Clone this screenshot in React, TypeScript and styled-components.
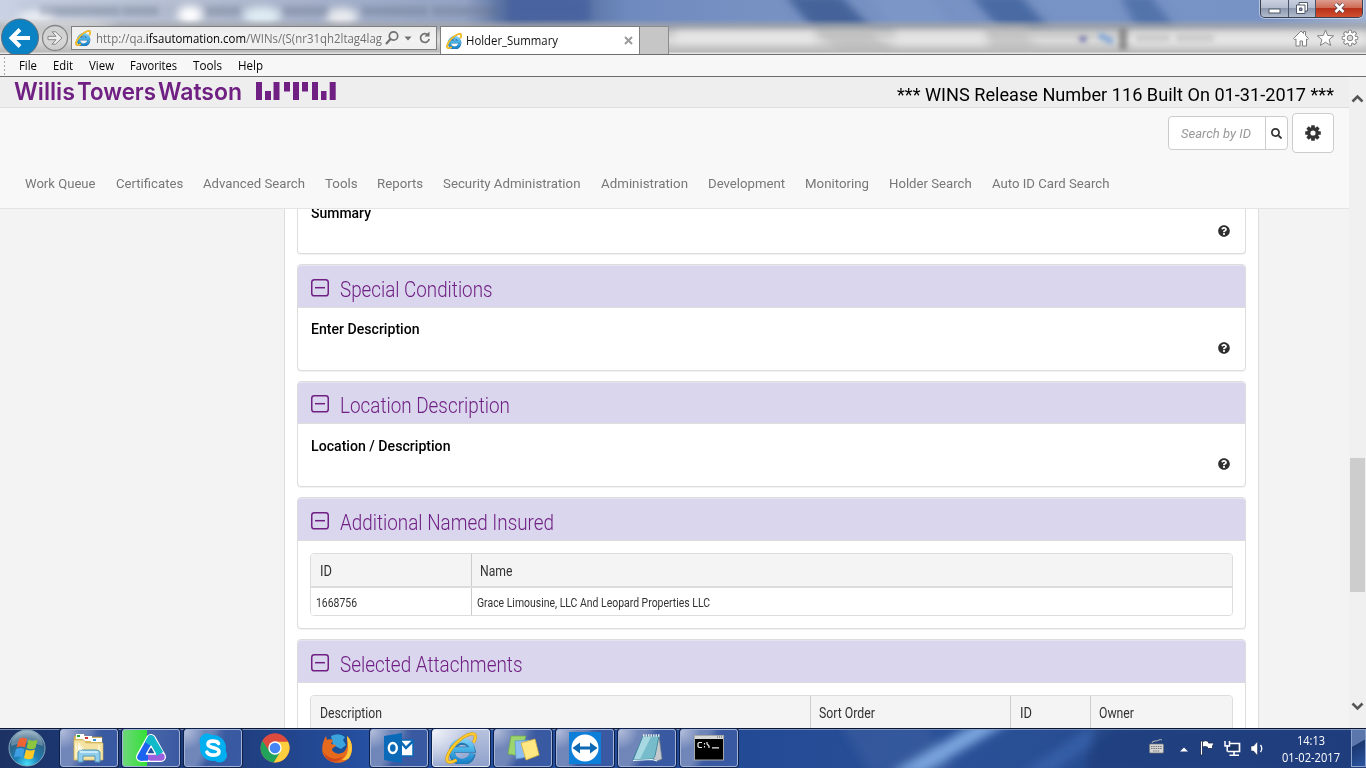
import React, { useLayoutEffect, useRef } from 'react';
import styled, { createGlobalStyle, css } from 'styled-components';
import { FaQuestionCircle, FaSearch } from 'react-icons/fa';

const GlobalStyle = createGlobalStyle`
  *, *::before, *::after { box-sizing: border-box; }
  body { margin: 0; overflow: hidden; background: #fff; font-family: Roboto, "Liberation Sans", sans-serif; }
  svg { display: block; }
`;

const ui = css`font-family: "Open Sans", "Noto Sans", sans-serif;`;

/* Text set to a fixed measure: the glyphs are condensed or widened to fill it. */
const FitBox = styled.span<{ $w: number }>`
  display: block;
  flex: none;
  width: ${(p) => p.$w}px;
  white-space: nowrap;
`;
const FitInner = styled.span`
  display: inline-block;
  vertical-align: top;
  transform-origin: 0 50%;
`;
function Fit({ w, children }: { w: number; children: React.ReactNode }) {
  const ref = useRef<HTMLSpanElement>(null);
  useLayoutEffect(() => {
    const el = ref.current;
    if (!el) return;
    el.style.transform = 'none';
    const natural = el.getBoundingClientRect().width;
    if (natural > 0) el.style.transform = `scaleX(${w / natural})`;
  }, [w, children]);
  return <FitBox $w={w}><FitInner ref={ref}>{children}</FitInner></FitBox>;
}

const Screen = styled.div`
  width: 1366px; height: 768px; overflow: hidden;
  display: flex; flex-direction: column;
`;

/* ---------- browser chrome ---------- */
const Chrome = styled.header`
  position: relative; height: 55px; flex: none; overflow: hidden;
  border-bottom: 1px solid #6d6d6d; background: #cfcfcf;
`;
const Glass = styled.svg`position: absolute; left: 0; top: 0;`;
const ChromeBar = styled.div`
  position: relative; height: 54px; display: flex; align-items: flex-end;
`;
const BackForward = styled.svg`flex: none;`;
const Address = styled.div`
  ${ui}
  flex: none; margin: 0 0 4px 1px; width: 366px; height: 24px;
  border: 1px solid #7f7f7f; background: rgba(246, 246, 246, 0.86);
  display: flex; align-items: center; padding-left: 3px;
  font-size: 12px; line-height: 16px; color: #707070;
  b { font-weight: 400; color: #000; }
`;
const Url = styled.div`margin: 2px 0 0 5px; width: 286px; overflow: hidden;`;
const AddressIcons = styled.svg`margin-left: 3px; flex: none;`;
const Tab = styled.div`
  ${ui}
  flex: none; margin-left: 3px; width: 200px; height: 28px; background: #fff;
  border: 1px solid #7f7f7f; border-bottom: 0;
  display: flex; align-items: center; padding-left: 5px;
  font-size: 12px; line-height: 16px; color: #111;
`;
const TabTitle = styled.div`margin-left: 4px; width: 158px;`;
const NewTab = styled.div`
  flex: none; width: 29px; height: 28px; border: 1px solid #8c8c8c; border-left: 0; border-bottom: 0;
  background: #c6c6c6;
`;
const ChromeTools = styled.svg`margin: 0 6px 6px auto; flex: none;`;
const WindowButtons = styled.div`
  position: absolute; right: 3px; top: 0; display: flex;
  height: 18px; width: 103px; border: 1px solid #39404f; border-top: 0; border-radius: 0 0 5px 5px;
  overflow: hidden; box-shadow: 0 0 0 1px rgba(255,255,255,.45);
`;
const WinButton = styled.div<{ $w: number; $close?: boolean }>`
  width: ${(p) => p.$w}px; height: 17px; flex: none; padding-bottom: 2px;
  display: flex; align-items: center; justify-content: center;
  border-right: ${(p) => (p.$close ? '0' : '1px solid #4a5468')};
  background: ${(p) => p.$close
    ? 'linear-gradient(#dd9c8e 0, #cf6b55 45%, #b8301a 50%, #d0502f 100%)'
    : 'linear-gradient(#c9d0df 0, #b3bdd0 45%, #8d98ae 50%, #b2bccd 100%)'};
`;

const MenuBar = styled.nav`
  ${ui}
  height: 22px; flex: none; background: #f7f7f7; border-bottom: 1px solid #6d6d6d;
  display: flex; align-items: center; font-size: 12px; line-height: 16px; color: #000;
`;
const Grip = styled.div`
  width: 1px; height: 18px; margin: 0 14px 0 4px;
  background: repeating-linear-gradient(#a8a8a8 0 2px, transparent 2px 4px);
`;
const MenuItem = styled.div<{ $gap: number }>`margin-right: ${(p) => p.$gap}px;`;

/* ---------- page ---------- */
const Page = styled.div`height: 651px; flex: none; display: flex;`;
const PageView = styled.div`width: 1349px; flex: none; overflow: hidden; display: flex; flex-direction: column;`;
const Scroll = styled.div`
  width: 17px; flex: none; background: #f0f0f0; padding: 0 1px;
  display: flex; flex-direction: column;
`;
const ScrollArrow = styled.svg`flex: none;`;
const Thumb = styled.div`height: 134px; margin-top: 347px; width: 15px; background: #cdcdcd;`;
const ScrollRest = styled.div`flex: 1;`;

const Banner = styled.div`
  height: 31px; flex: none; background: #eee; border-bottom: 1px solid #dedede;
  display: flex; align-items: flex-start; padding: 0 15px 0 14px;
`;
const Wordmark = styled.div`
  display: flex; font: 600 24px/30px Inter, sans-serif; color: #702082; gap: 2px; margin-right: 14px;
`;
const Release = styled.div`margin: 6px 0 0 auto; font-size: 18px; line-height: 24px; color: #000;`;

const Header = styled.div`
  height: 101px; flex: none; background: #f8f8f8; border-bottom: 1px solid #e4e4e4;
  display: flex; flex-direction: column;
`;
const Actions = styled.div`display: flex; justify-content: flex-end; align-items: center; gap: 4px; padding: 5px 15px 0 0;`;
const SearchGroup = styled.div`
  display: flex; width: 120px; height: 34px; border: 1px solid #ccc; border-radius: 4px; background: #fff; color: #333;
`;
const SearchInput = styled.div`
  width: 97px; border-right: 1px solid #ccc; padding-left: 12px;
  display: flex; align-items: center; font-style: italic; font-size: 13.5px; color: #999;
`;
const SearchButton = styled.div`flex: 1; display: flex; align-items: center; justify-content: center;`;
const GearButton = styled.div`
  width: 42px; height: 40px; border: 1px solid #ccc; border-radius: 4px; background: #fff; color: #333;
  display: flex; align-items: center; justify-content: center;
`;
const Nav = styled.nav`
  display: flex; gap: 20px; margin-top: 22px; padding-left: 25px;
  font-size: 13px; line-height: 18px; color: #777;
`;

const Content = styled.main`
  height: 519px; flex: none; overflow: hidden; background: #f3f3f3; padding: 0 90px 0 284px; display: flex;
`;
const Well = styled.div`
  width: 975px; height: 540px; background: #fff; border: 1px solid #ddd; border-width: 0 1px; padding: 0 12px;
`;
const Panel = styled.section<{ $h: number; $open?: boolean }>`
  height: ${(p) => p.$h}px; width: 949px; margin-bottom: 10px;
  border: 1px solid #ddd; border-radius: 4px; background: #fff; box-shadow: 0 1px 1px rgba(0,0,0,.06);
  ${(p) => p.$open && css`border-top: 0; border-radius: 0 0 4px 4px;`}
`;
const PanelHead = styled.h3<{ $h: number }>`
  margin: 0; height: ${(p) => p.$h}px; display: flex; align-items: flex-start; gap: 11px; padding: 0 0 0 13px;
  background: #d9d6ee; border: 1px solid #ddd; border-width: 0 0 1px; box-shadow: inset 0 1px #e6e4f3;
  color: #702082; font-size: 22px; line-height: 28px; font-weight: 300;
  border-radius: 3px 3px 0 0;
`;
const HeadText = styled.div<{ $top: number }>`padding-top: ${(p) => p.$top}px;`;
const PanelBody = styled.div<{ $top: number }>`
  padding: ${(p) => p.$top}px 16px 0 13px; display: flex; flex-direction: column;
  color: #000; font-size: 14px; line-height: 20px; font-weight: 500;
`;
const SummaryLine = styled.div`margin-top: -6px; height: 22px;`;
const Label = styled.div<{ $h?: number }>`height: ${(p) => p.$h ?? 23}px;`;
const Help = styled.div`align-self: flex-end; height: 12px; color: #2f2f2f; margin-right: -.5px;`;

const Table = styled.div`
  margin: 12px 0 0 12px; width: 923px; border: 1px solid #ddd; border-radius: 4px; overflow: hidden; color: #333;
`;
const Row = styled.div<{ $head?: boolean }>`
  display: flex;
  height: ${(p) => (p.$head ? 34 : 27)}px;
  background: ${(p) => (p.$head ? '#f4f4f4' : '#fff')};
  border-bottom: ${(p) => (p.$head ? '2px solid #ddd' : '0')};
  font-size: ${(p) => (p.$head ? 14 : 12)}px;
`;
const Cell = styled.div<{ $w?: number; $pad: number }>`
  ${(p) => (p.$w ? `width: ${p.$w}px; flex: none; border-right: 1px solid #ccc;` : 'flex: 1;')}
  padding: 2px 0 0 ${(p) => p.$pad}px; display: flex; align-items: center;
`;

/* ---------- taskbar ---------- */
const Taskbar = styled.footer`
  position: relative; height: 40px; flex: none; overflow: hidden; background: #21458c;
`;
const TaskRow = styled.div`
  ${ui}
  position: relative; height: 40px; padding-top: 1px; display: flex; color: #fff; font-size: 12px; line-height: 17px;
`;
const StartSlot = styled.div`width: 60px; height: 39px; padding-left: 8px; flex: none;`;
const TaskButton = styled.div<{ $look: 'framed' | 'plain' | 'active' | 'progress' }>`
  width: 58px; height: 38px; margin-right: 4px; flex: none;
  display: flex; align-items: center; justify-content: center; border-radius: 3px;
  ${(p) => p.$look !== 'plain' && css`
    border: 1px solid #a3b3d6; box-shadow: 0 0 0 1px #0d1f4b;
    background: radial-gradient(circle at 0 0, #b6c0dc 0, #7086b9 30%, transparent 62%), linear-gradient(115deg, #7287b9 0 35%, #3a59a0 50%, #385aa4);
  `}
  ${(p) => p.$look === 'active' && css`
    border-color: #e3e8f3;
    background: radial-gradient(circle at 0 0, #f2f4fa 0, transparent 60%), linear-gradient(#b7c2de, #8fa1cc);
  `}
  ${(p) => p.$look === 'progress' && css`
    background: linear-gradient(90deg, #6ed77b 0, #34e036 42%, #4866a8 43%, #3b5aa2);
  `}
`;
const Tray = styled.div`margin-left: auto; display: flex; flex: none;`;
const Clock = styled.div`
  width: 76px; padding-top: 3px; margin-left: 5px; display: flex; flex-direction: column; align-items: center;
`;
const ShowDesktop = styled.div`
  width: 15px; height: 38px; border: 1px solid #8ba3cd; margin-left: 2px;
  background: linear-gradient(150deg, #5a76ab 0 38%, #1b3871 40%, #2b55a0);
`;

function IeLogo({ size }: { size: number }) {
  return (
    <svg width={size} height={size} viewBox="0 0 32 32" style={{ flex: 'none' }}>
      <defs>
        <linearGradient id="ieBlue" gradientUnits="userSpaceOnUse" x1="0" y1="4" x2="0" y2="30">
          <stop offset="0" stopColor="#8fdcfa" /><stop offset=".5" stopColor="#4bb3e6" /><stop offset="1" stopColor="#1b83cb" />
        </linearGradient>
      </defs>
      <g fill="none">
        <path d="M27.500 21.500A10.300 10.300 0 1 1 27.300 17.700H9" stroke="#2478b2" strokeWidth="6.200" />
        <path d="M27 21.500A10.300 10.300 0 1 1 27.300 17.700H9" stroke="url(#ieBlue)" strokeWidth="4.800" />
        <path d="M28.500 10.500C32 4 30.500.9 25.500 2 16 4.500 4.500 16.500 2.200 25c-1.300 6 2.800 6.500 9.300 3" stroke="#cf9412" strokeWidth="3.200" />
        <path d="M28.500 10.500C32 4 30.500.9 25.500 2 16 4.500 4.500 16.500 2.200 25c-1.300 6 2.800 6.500 9.300 3" stroke="#fccb2e" strokeWidth="2.300" />
      </g>
    </svg>
  );
}

function GlassBackdrop() {
  return (
    <Glass width="1366" height="54" viewBox="0 0 1366 54">
      <defs>
        <linearGradient id="sky" x1="0" x2="1" y1="0" y2="0">
          <stop offset="0" stopColor="#c9d2e4" /><stop offset=".15" stopColor="#b4bdd1" /><stop offset=".34" stopColor="#93a3c5" />
          <stop offset=".375" stopColor="#4a659b" /><stop offset=".42" stopColor="#56709f" /><stop offset=".46" stopColor="#6f8abf" />
          <stop offset=".55" stopColor="#7891c3" /><stop offset=".93" stopColor="#7793c6" /><stop offset="1" stopColor="#9fb2d4" />
        </linearGradient>
        <linearGradient id="frost" x1="0" x2="0" y1="0" y2="1">
          <stop offset="0" stopColor="#aaa" stopOpacity="0" /><stop offset=".2" stopColor="#a2a4a8" stopOpacity=".8" />
          <stop offset=".4" stopColor="#c8c8c8" /><stop offset=".62" stopColor="#dadada" /><stop offset="1" stopColor="#b4b4b4" />
        </linearGradient>
        <filter id="b3" x="-20%" y="-60%" width="140%" height="220%"><feGaussianBlur stdDeviation="4" /></filter>
        <filter id="b2" x="-20%" y="-60%" width="140%" height="220%"><feGaussianBlur stdDeviation="2.600" /></filter>
      </defs>
      <rect width="1366" height="54" fill="url(#sky)" />
      <g filter="url(#b3)">
        <path d="M785-5h55l38 40h-60z" fill="#45649a" /><path d="M870-5h60l20 32h-58z" fill="#7c96c8" />
        <path d="M970-5h50l35 40h-50z" fill="#4a6aa3" /><path d="M1120-5h30l30 40h-40z" fill="#5373ab" />
        <rect x="510" y="-5" width="80" height="28" fill="#4864a0" />
        <path d="M20 4h470v14H20z" fill="#9aa4b9" opacity=".3" />
        <ellipse cx="36" cy="17" rx="18" ry="6" fill="#eff3f8" /><ellipse cx="190" cy="15" rx="12" ry="9" fill="#fff" />
        <ellipse cx="262" cy="16" rx="19" ry="9" fill="#dfecf3" /><ellipse cx="342" cy="17" rx="16" ry="9" fill="#e8eaee" />
      </g>
      <g filter="url(#b2)" fill="#4f5b71" opacity=".22">
        <rect x="40" y="6" width="80" height="10" /><rect x="122" y="6" width="36" height="10" /><rect x="206" y="6" width="34" height="10" />
        <rect x="283" y="6" width="45" height="10" /><rect x="362" y="6" width="66" height="10" /><rect x="432" y="6" width="66" height="10" />
      </g>
      <rect y="19" width="1366" height="35" fill="url(#frost)" />
      <g filter="url(#b3)">
        <path d="M815 30h55l28 28h-55z" fill="#b9b9b9" opacity=".65" /><path d="M985 28h40l15 30h-45z" fill="#bdbdbd" opacity=".6" />
        <rect x="675" y="32" width="140" height="10" fill="#eaeaea" /><rect x="895" y="32" width="90" height="12" fill="#e5e5e5" />
        <rect x="1130" y="33" width="236" height="12" fill="#e6e6e6" /><ellipse cx="55" cy="25" rx="60" ry="4" fill="#ddd" />
      </g>
      <g filter="url(#b2)">
        <rect x="1119" y="28" width="8" height="22" fill="#777" opacity=".75" /><ellipse cx="1083" cy="39" rx="4" ry="3" fill="#7476aa" />
        <path d="M1099 35l14 7" stroke="#84a8d6" strokeWidth="6" />
        <rect x="1136" y="34" width="34" height="8" fill="#aaa" opacity=".4" /><rect x="1176" y="34" width="38" height="8" fill="#aaa" opacity=".4" />
      </g>
      <rect y="52.500" width="1366" height="1.500" fill="#e4e4e4" />
    </Glass>
  );
}

function Logo() {
  const bars = [[0, 0, 6, 18], [9, 9, 6, 9], [17.5, 0, 6, 18], [28, 0, 6, 9.5], [37, 0, 6, 18], [46, 0, 6, 9.5], [56, 0, 6, 18], [65, 9, 5.5, 9], [73.7, 0, 6, 18]];
  return (
    <svg width="80" height="18" viewBox="0 0 80 18" style={{ marginTop: 5 }}>
      {bars.map(([x, y, w, h]) => <rect key={x} x={x} y={y} width={w} height={h} fill="#702082" />)}
    </svg>
  );
}

const Cog = () => (
  <svg width="16" height="16" viewBox="-8 -8 16 16">
    {[0, 45, 90, 135].map((a) => <rect key={a} x="-1.800" y="-7.800" width="3.600" height="15.600" rx=".5" fill="#333" transform={`rotate(${a})`} />)}
    <circle r="5.900" fill="#333" /><circle r="2.600" fill="#fff" />
  </svg>
);

const MinusBox = ({ top }: { top: number }) => (
  <svg width="18" height="18" viewBox="0 0 18 18" fill="none" stroke="#702082" strokeWidth="1.500" style={{ marginTop: top }}>
    <rect x=".75" y=".75" width="16.500" height="16" rx="2.600" /><path d="M4 8.700h10" />
  </svg>
);

const menu: [string, number, number][] = [
  ['File', 18, 16], ['Edit', 20, 16], ['View', 25, 16], ['Favorites', 47, 16], ['Tools', 29, 16], ['Help', 25, 0],
];
const nav: [string, number][] = [
  ['Work Queue', 70.5], ['Certificates', 67.2], ['Advanced Search', 102], ['Tools', 32.6], ['Reports', 46.2], ['Security Administration', 137.5],
  ['Administration', 87], ['Development', 77], ['Monitoring', 64], ['Holder Search', 82.7], ['Auto ID Card Search', 117.5],
];

function Section({ title, w, h, head = 43, top = 14, children }: {
  title: string; w: number; h: number; head?: number; top?: number; children: React.ReactNode;
}) {
  return (
    <Panel $h={h}>
      <PanelHead $h={head}><MinusBox top={top} /><HeadText $top={top - 3}><Fit w={w}>{title}</Fit></HeadText></PanelHead>
      {children}
    </Panel>
  );
}

const taskIcons: { look: 'framed' | 'plain' | 'active' | 'progress'; icon: React.ReactNode }[] = [
  { look: 'framed', icon: (
    <svg width="34" height="32" viewBox="0 0 34 32">
      <path d="M2 5l2-2h8l2 2h16v23H2z" fill="#d9bd62" stroke="#b99943" strokeWidth=".6" />
      <path d="M4 2h8v5H4z" fill="#fff" /><path d="M5 3h3v2H5z" fill="#28a52f" /><path d="M11 4h9v5h-9z" fill="#fff" /><path d="M13 5h3v2h-3z" fill="#c93930" />
      <path d="M19 6h11v4H19z" fill="#fff" /><path d="M21 7h3v2h-3z" fill="#3d95d3" />
      <path d="M2 8h10l2 3h17v17H2z" fill="#f4e3a1" stroke="#cfb35d" strokeWidth=".6" /><path d="M4 11v15M7 11v15M27 13v13" stroke="#fdf5cf" strokeWidth="1.500" />
      <path d="M6 30V21q0-3 4-3h14q4 0 4 3v9h-5v-6H11v6z" fill="#8fcdea" stroke="#5297bd" /><path d="M8 20h18" stroke="#d9f3fc" strokeWidth="1.500" />
      <path d="M8 12v8M4 16h8M5.500 13.500l5 5M10.500 13.500l-5 5" stroke="#fff" strokeWidth=".8" />
    </svg>) },
  { look: 'progress', icon: (
    <svg width="32" height="30" viewBox="0 0 32 30" strokeLinecap="round" strokeLinejoin="round" fill="none">
      <path d="M16 6L26 24H6z" stroke="#fff" strokeWidth="10" />
      <path d="M16 6L6 24" stroke="#1c63f0" strokeWidth="7.500" /><path d="M26 24H16" stroke="#9b60df" strokeWidth="7.500" />
      <path d="M6 24h7" stroke="#1c63f0" strokeWidth="7.500" strokeLinecap="butt" /><path d="M13 11L16 6L25 21" stroke="#12b9c9" strokeWidth="7.500" strokeLinecap="butt" />
      <path d="M16 13l4.600 8h-9.200z" fill="#24549f" stroke="#fff" strokeWidth="1.300" />
    </svg>) },
  { look: 'framed', icon: (
    <svg width="32" height="32" viewBox="0 0 32 32">
      <circle cx="16" cy="16" r="13" fill="#00aff0" /><circle cx="10" cy="9" r="7.500" fill="#00aff0" /><circle cx="22.500" cy="23" r="7.500" fill="#00aff0" />
      <path d="M21.500 11.500C20 8.500 11 8 11 12.300c0 4.400 11 2.500 11 7.300 0 4.900-10 4.400-12 .6" fill="none" stroke="#fff" strokeWidth="3.600" strokeLinecap="round" />
    </svg>) },
  { look: 'plain', icon: (
    <svg width="30" height="30" viewBox="0 0 30 30">
      <circle cx="15" cy="15" r="14.500" fill="#dd4b3e" /><path d="M15 15L2.500 7.700A14.500 14.500 0 0 0 13.800 29.400L21.300 18.500z" fill="#22a35c" />
      <path d="M15 8.500h13A14.500 14.500 0 0 1 13.800 29.400L20.600 18.200z" fill="#fdcf3f" /><path d="M2.500 7.700A14.500 14.500 0 0 1 28 8.500H15a6.500 6.500 0 0 0-5.800 9.500z" fill="#dd4b3e" />
      <circle cx="15" cy="15" r="6.700" fill="#fff" /><circle cx="15" cy="15" r="5.300" fill="#4385f4" />
    </svg>) },
  { look: 'plain', icon: (
    <svg width="32" height="32" viewBox="0 0 32 32">
      <circle cx="17" cy="15" r="13.500" fill="#1b4f97" /><path d="M10 4q8-4 14 1l-2 3 3 5-5 4-8-4z" fill="#3ba4dc" />
      <path d="M26 4c7 6 6 18 1 23-8 7-21 4-25-5C0 16 2 9 5 4l1 4c2-1 4-1 6 0l-2 4 5 1c-1 3-4 2-4 5 4 6 12 4 14-1 2-4 1-9 1-13z" fill="#e66a1d" />
      <path d="M26 4c7 6 6 18 1 23-2 1-4 1-6 1 5-4 6-8 6-13 0-4-1-7-1-11z" fill="#fdc83c" /><path d="M2.500 20c4 7 14 9 20 4-5 8-17 8-20-4z" fill="#cf461d" />
    </svg>) },
  { look: 'framed', icon: (
    <svg width="32" height="32" viewBox="0 0 32 32">
      <path d="M16 8h14v16H16z" fill="#fff" stroke="#0a6ab8" strokeWidth="1.500" /><path d="M17 9l6 7 7-7" fill="none" stroke="#0a6ab8" strokeWidth="2.500" />
      <path d="M1 4l18-3v30L1 28z" fill="#0a6ab8" /><ellipse cx="9.800" cy="16" rx="4" ry="5" fill="none" stroke="#fff" strokeWidth="2.400" />
    </svg>) },
  { look: 'active', icon: <IeLogo size={32} /> },
  { look: 'framed', icon: (
    <svg width="34" height="28" viewBox="0 0 34 28">
      <path d="M5 2l15 0-6 20-12-2z" fill="#9cd46e" stroke="#6fac48" strokeWidth=".7" /><path d="M9 7l14-1-1 17-12 2z" fill="#8cbef2" stroke="#5a93cf" strokeWidth=".7" />
      <path d="M15 9l14-4 4 16-13 5z" fill="#ffe784" stroke="#d8b13c" strokeWidth=".8" />
    </svg>) },
  { look: 'framed', icon: (
    <svg width="32" height="32" viewBox="0 0 32 32">
      <rect width="32" height="32" fill="#0e7fd9" /><circle cx="16" cy="16" r="13.500" fill="#fff" />
      <path d="M3.500 16l7.500-5.500v4h10v-4l7.500 5.500-7.500 5.500v-4H11v4z" fill="#0d68b5" />
    </svg>) },
  { look: 'framed', icon: (
    <svg width="32" height="30" viewBox="0 0 32 30">
      <path d="M28 3l3 23-5 2-5-3z" fill="#c3c9cd" stroke="#74808a" strokeWidth=".7" /><path d="M12 3h16l-4 20-2 3-20 1z" fill="#76bccb" stroke="#357f92" strokeWidth=".8" />
      <path d="M12 4h8L9 26l-6 .5z" fill="#b9e1e9" opacity=".75" /><path d="M12 2.500h17" stroke="#e4e8ea" strokeWidth="2.500" strokeDasharray="1.500 1" />
      <path d="M2 27.500l19-1 5 1.500" stroke="#e6f6f9" strokeWidth="1.200" fill="none" />
    </svg>) },
  { look: 'framed', icon: (
    <svg width="30" height="26" viewBox="0 0 30 26">
      <rect x=".5" y=".5" width="29" height="24.500" fill="#000" stroke="#a7a7a7" /><path d="M1 2.500h28" stroke="#d7d7d7" strokeWidth="3" /><path d="M23 2h5" stroke="#555" strokeDasharray="1 1" />
      <g fill="none" stroke="#e8e8e8" strokeWidth="1.200"><path d="M8 7.500H5l-1 1v3l1 1h3M10.500 8v1.500M10.500 11v1.500M13 7v2l2 2v2M18 12.800h7" /></g>
    </svg>) },
];

function TaskBackdrop() {
  return (
    <Glass width="1366" height="40" viewBox="0 0 1366 40">
      <defs>
        <linearGradient id="task" x1="0" x2="1" y1="0" y2="0">
          <stop offset="0" stopColor="#1d3263" /><stop offset=".04" stopColor="#1c3670" /><stop offset=".17" stopColor="#1f3d7d" />
          <stop offset=".27" stopColor="#2650a2" /><stop offset=".55" stopColor="#234a94" /><stop offset=".7" stopColor="#2a5198" /><stop offset="1" stopColor="#244384" />
        </linearGradient>
        <filter id="tb" x="-20%" y="-40%" width="140%" height="180%"><feGaussianBlur stdDeviation="5" /></filter>
      </defs>
      <rect width="1366" height="40" fill="url(#task)" />
      <g filter="url(#tb)">
        <path d="M840-5h85l30 50h-85z" fill="#3a5d9f" opacity=".6" />
        <path d="M890 46L978-6h32L922 46z" fill="#79a4dd" /><path d="M1020 46l75-50h25l-70 50z" fill="#3c6bb4" opacity=".6" />
        <path d="M1095 -5h280v50h-290z" fill="#203c78" opacity=".65" />
      </g>
      <rect width="1366" height="1" fill="#0b1530" /><rect y="1" width="1366" height="1" fill="#8ca2c8" opacity=".8" />
    </Glass>
  );
}

export default function App() {
  return (
    <Screen>
      <GlobalStyle />
      <Chrome>
        <GlassBackdrop />
        <ChromeBar>
          <BackForward width="70" height="36" viewBox="0 0 70 36">
            <circle cx="20" cy="19.500" r="18.500" fill="#0a82c4" stroke="#5d6d78" strokeWidth="1" />
            <path d="M30 20H12M20 11.500L11.500 20l8.500 8.500" fill="none" stroke="#fff" strokeWidth="4" />
            <circle cx="55" cy="20" r="12.500" fill="#d5d5d5" fillOpacity=".6" stroke="#858585" strokeWidth="1.300" />
            <path d="M48 18.300h8l-4-4.500h3.500l6.500 6.200-6.500 6.200H52l4-4.500h-8z" fill="#eee" stroke="#858585" strokeWidth="1" />
          </BackForward>
          <Address>
            <IeLogo size={16} />
            <Url><Fit w={286}>http://qa.<b>ifsautomation.com</b>/WINs/(S(nr31qh2ltag4lag</Fit></Url>
            <AddressIcons width="48" height="16" viewBox="0 0 48 16" fill="none" stroke="#707070" strokeWidth="1.700">
              <circle cx="8.500" cy="6" r="4.200" /><path d="M5.500 9L1 14" strokeWidth="2.200" /><path d="M19.500 6.500h7l-3.500 4z" fill="#707070" stroke="none" />
              <path d="M43 4.800A4.400 4.400 0 1 0 44.200 9" /><path d="M44.500 1.500v5h-5z" fill="#707070" stroke="none" />
            </AddressIcons>
          </Address>
          <Tab>
            <IeLogo size={16} />
            <TabTitle><Fit w={92}>Holder_Summary</Fit></TabTitle>
            <svg width="9" height="9" viewBox="0 0 9 9"><path d="M1 1l7 7M8 1L1 8" stroke="#9b9b9b" strokeWidth="2" /></svg>
          </Tab>
          <NewTab />
          <ChromeTools width="68" height="20" viewBox="0 0 68 20" fill="#fff" stroke="#808080" strokeWidth="1" strokeLinejoin="round">
            <path d="M1.500 10.500L9 3l2.500 2.500V3.500h2V7.500l3 3-1 1.200-1-.7V18h-4v-5H8v5H4v-7l-1.300.7z" />
            <path d="M33.500 2l2.200 5.500 6 .3-4.600 3.800 1.600 5.900-5.200-3.300-5.200 3.300 1.600-5.900-4.600-3.800 6-.3z" />
            <g transform="translate(58 10)">
              {[0, 45, 90, 135].map((a) => <rect key={a} x="-1.700" y="-7.800" width="3.400" height="15.600" rx=".8" transform={`rotate(${a})`} />)}
              <circle r="5.300" stroke="none" /><circle r="2.800" fill="#ddd" />
            </g>
          </ChromeTools>
        </ChromeBar>
        <WindowButtons>
          <WinButton $w={28}><svg width="14" height="12"><rect x="1" y="7" width="11" height="4" fill="#fff" stroke="#505a6b" /></svg></WinButton>
          <WinButton $w={27}>
            <svg width="14" height="14" viewBox="0 0 14 14" fill="#fff" stroke="#505a6b"><path d="M4 1.500h8.500V10H4z" /><path d="M1.500 4H10v8.500H1.500z" /><path d="M4.500 7H7v2.500H4.500z" fill="#8a95aa" /></svg>
          </WinButton>
          <WinButton $w={47} $close>
            <svg width="13" height="12" viewBox="0 0 13 12"><path d="M2.500 2l8 8M10.500 2l-8 8" stroke="#5b4650" strokeWidth="4.200" /><path d="M2.500 2l8 8M10.500 2l-8 8" stroke="#fff" strokeWidth="2.500" /></svg>
          </WinButton>
        </WindowButtons>
      </Chrome>
      <MenuBar>
        <Grip />
        {menu.map(([label, w, gap]) => <MenuItem key={label} $gap={gap}><Fit w={w}>{label}</Fit></MenuItem>)}
      </MenuBar>

      <Page>
        <PageView>
          <Banner>
            <Wordmark><Fit w={61}>Willis</Fit><Fit w={79}>Towers</Fit><Fit w={84}>Watson</Fit></Wordmark>
            <Logo />
            <Release><Fit w={437}>*** WINS Release Number 116 Built On 01-31-2017 ***</Fit></Release>
          </Banner>
          <Header>
            <Actions>
              <SearchGroup>
                <SearchInput><Fit w={70}>Search by ID</Fit></SearchInput>
                <SearchButton><FaSearch size={11} /></SearchButton>
              </SearchGroup>
              <GearButton><Cog /></GearButton>
            </Actions>
            <Nav>{nav.map(([label, w]) => <Fit key={label} w={w}>{label}</Fit>)}</Nav>
          </Header>
          <Content>
            <Well>
              <Panel $h={45} $open>
                <PanelBody $top={0}>
                  <SummaryLine><Fit w={60}>Summary</Fit></SummaryLine>
                  <Help><FaQuestionCircle size={12} /></Help>
                </PanelBody>
              </Panel>
              <Section title="Special Conditions" w={152.5} h={107}>
                <PanelBody $top={11}><Label><Fit w={108.5}>Enter Description</Fit></Label><Help><FaQuestionCircle size={12} /></Help></PanelBody>
              </Section>
              <Section title="Location Description" w={170} h={106} head={42} top={13}>
                <PanelBody $top={12}><Label $h={22}><Fit w={139.5}>Location / Description</Fit></Label><Help><FaQuestionCircle size={12} /></Help></PanelBody>
              </Section>
              <Section title="Additional Named Insured" w={214} h={132}>
                <Table>
                  <Row $head><Cell $w={161} $pad={8.5}><Fit w={12}>ID</Fit></Cell><Cell $pad={8}><Fit w={32.5}>Name</Fit></Cell></Row>
                  <Row><Cell $w={161} $pad={5}><Fit w={41}>1668756</Fit></Cell><Cell $pad={5}><Fit w={233}>Grace Limousine, LLC And Leopard Properties LLC</Fit></Cell></Row>
                </Table>
              </Section>
              <Section title="Selected Attachments" w={182.5} h={132}>
                <Table>
                  <Row $head>
                    <Cell $w={500} $pad={8.5}><Fit w={62}>Description</Fit></Cell><Cell $w={200} $pad={8}><Fit w={56}>Sort Order</Fit></Cell>
                    <Cell $w={80} $pad={8.5}><Fit w={12}>ID</Fit></Cell><Cell $pad={8}><Fit w={35}>Owner</Fit></Cell>
                  </Row>
                </Table>
              </Section>
            </Well>
          </Content>
        </PageView>
        <Scroll>
          <ScrollArrow width="15" height="34" viewBox="0 0 15 34"><path d="M2.500 24.500l5-5 5 5" fill="none" stroke="#555" strokeWidth="2.600" /></ScrollArrow>
          <Thumb />
          <ScrollRest />
          <ScrollArrow width="15" height="34" viewBox="0 0 15 34"><path d="M2.500 9.500l5 5 5-5" fill="none" stroke="#555" strokeWidth="2.600" /></ScrollArrow>
        </Scroll>
      </Page>

      <Taskbar>
        <TaskBackdrop />
        <TaskRow>
          <StartSlot>
            <svg width="38" height="38" viewBox="0 0 38 38">
              <defs>
                <radialGradient id="orb" cx=".5" cy=".95" r=".95"><stop offset="0" stopColor="#47e0fb" /><stop offset=".35" stopColor="#1c7fb5" /><stop offset=".75" stopColor="#315f80" /><stop offset="1" stopColor="#9cb5c4" /></radialGradient>
              </defs>
              <circle cx="19" cy="19" r="18" fill="url(#orb)" stroke="#84a9bd" strokeWidth="1" /><path d="M3 17a16 15 0 0 1 32 0q-16-7-32 0z" fill="#c3d5df" opacity=".35" />
              <path d="M11 10q4-2.500 8 0l-2 8.500q-4-2-8.500 0z" fill="#ee6333" /><path d="M20.500 10.500q4 2.500 9 0l-2 8.500q-4 2.500-9 0z" fill="#8cc63f" />
              <path d="M8 20q4-2 8.500 0l-2 8.500q-4-2-8.500 0z" fill="#3f9fe4" /><path d="M18 20.500q4 2 9 0l-2 8.500q-4 2.500-9 0z" fill="#fdc927" />
            </svg>
          </StartSlot>
          {taskIcons.map((t, i) => <TaskButton key={i} $look={t.look}>{t.icon}</TaskButton>)}
          <Tray>
            <svg width="120" height="38" viewBox="0 0 120 38">
              <rect x="1.500" y="15" width="14" height="9" rx="1" fill="#d6d6d6" stroke="#777" strokeWidth=".7" />
              <path d="M3 17.500h11M3 19.500h11M5 22h7" stroke="#777" strokeDasharray="1.500 .8" /><path d="M4 14q0-2 3-2t4-1 3 0" fill="none" stroke="#b9b9b9" />
              <path d="M32 22.500l4-4 4 4z" fill="#fff" />
              <g fill="#fff" stroke="#16264b" strokeWidth=".8"><path d="M52.500 12h2v14h-2z" /><path d="M54.500 12.500q3-1.500 6 0v1.500h5.500l-1.500 3v2.500h-5v-1.500q-3-1-5 0z" /></g>
              <path d="M81.500 14.500h10v8h-12" fill="#1a3465" stroke="#fff" strokeWidth="1.700" /><path d="M86 23v3M81.500 26.200h9.500" stroke="#fff" strokeWidth="1.600" />
              <path d="M77 12v5h4.500v-5M79.200 16v6.500" fill="none" stroke="#fff" strokeWidth="1.500" />
              <path d="M103 17h2.500l4-4.500v14l-4-4.500H103z" fill="#fff" stroke="#16264b" strokeWidth=".5" /><path d="M112.500 16q2.500 3.500 0 7" fill="none" stroke="#fff" strokeWidth="1.300" />
            </svg>
            <Clock><Fit w={28}>14:13</Fit><Fit w={58}>01-02-2017</Fit></Clock>
            <ShowDesktop />
          </Tray>
        </TaskRow>
      </Taskbar>
    </Screen>
  );
}
